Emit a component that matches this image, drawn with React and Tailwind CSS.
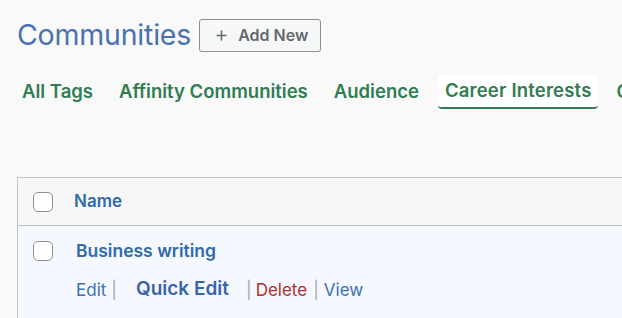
import { Plus } from "lucide-react";

const tabs = ["All Tags", "Affinity Communities", "Audience", "Career Interests", "Career Paths"];

const Checkbox = () => (
	<span className="block w-[20px] h-[20px] rounded-[5px] border border-[#8c8f94] bg-white flex-shrink-0" />
);

export default function App() {
	return (
		<div className="w-[622px] h-[318px] overflow-hidden bg-[#f9f9f9] font-['Inter',sans-serif]">
			{/* Header */}
			<div className="flex items-center gap-[8px] pl-[17px] pt-[18px]">
				<h1 className="text-[28.5px] leading-[34px] text-[#4a72b1] tracking-[-0.2px]">Communities</h1>
				<button
					type="button"
					className="flex items-center gap-[9px] h-[33px] pl-[14px] pr-[12px] rounded-[3px] border border-[#8c8f94] bg-[#f6f7f7] text-[#646970] text-[16px] font-semibold"
				>
					<Plus size={15} strokeWidth={2.5} />
					Add New
				</button>
			</div>

			{/* Tabs */}
			<div className="flex items-center gap-[12px] pl-[15px] mt-[23px] whitespace-nowrap">
				{tabs.map((t) => (
					<div
						key={t}
						className={
							t === "Career Interests"
								? "h-[34px] pl-[7px] pr-[6px] flex items-center rounded-[4px] bg-white border-b-2 border-[#2f7d52] text-[#2f7d52] text-[18.5px] font-semibold tracking-[0.2px]"
								: "h-[34px] px-[7px] flex items-center text-[#2f7d52] text-[18.5px] font-semibold"
						}
					>
						{t}
					</div>
				))}
			</div>

			{/* Table */}
			<div className="ml-[17px] mt-[68px] border-l border-t border-[#c3c4c7]">
				<div className="flex items-center gap-[21px] h-[48px] pl-[15px] bg-[#f6f7f7] border-b border-[#c3c4c7]">
					<Checkbox />
					<span className="text-[#2f6aab] text-[17px] font-semibold">Name</span>
				</div>
				<div className="bg-[#f5f8fe] h-[100px] pl-[15px] pt-[12px]">
					<div className="flex items-center gap-[23px]">
						<Checkbox />
						<span className="text-[#2f6aab] text-[17.5px] font-semibold">Business writing</span>
					</div>
					<div className="flex items-center pl-[43px] mt-[14px] text-[17px] text-[#3a71b0] whitespace-nowrap">
						<span>Edit</span>
						<span className="text-[#a7aaad] ml-[5px]">|</span>
						<span className="ml-[19px] text-[19px] font-semibold text-[#3a64a8] -mt-[3px]">Quick Edit</span>
						<span className="text-[#a7aaad] ml-[17px]">|</span>
						<span className="ml-[4px] text-[#b32d2e]">Delete</span>
						<span className="text-[#a7aaad] ml-[6px]">|</span>
						<span className="ml-[5px]">View</span>
					</div>
				</div>
			</div>
		</div>
	);
}
